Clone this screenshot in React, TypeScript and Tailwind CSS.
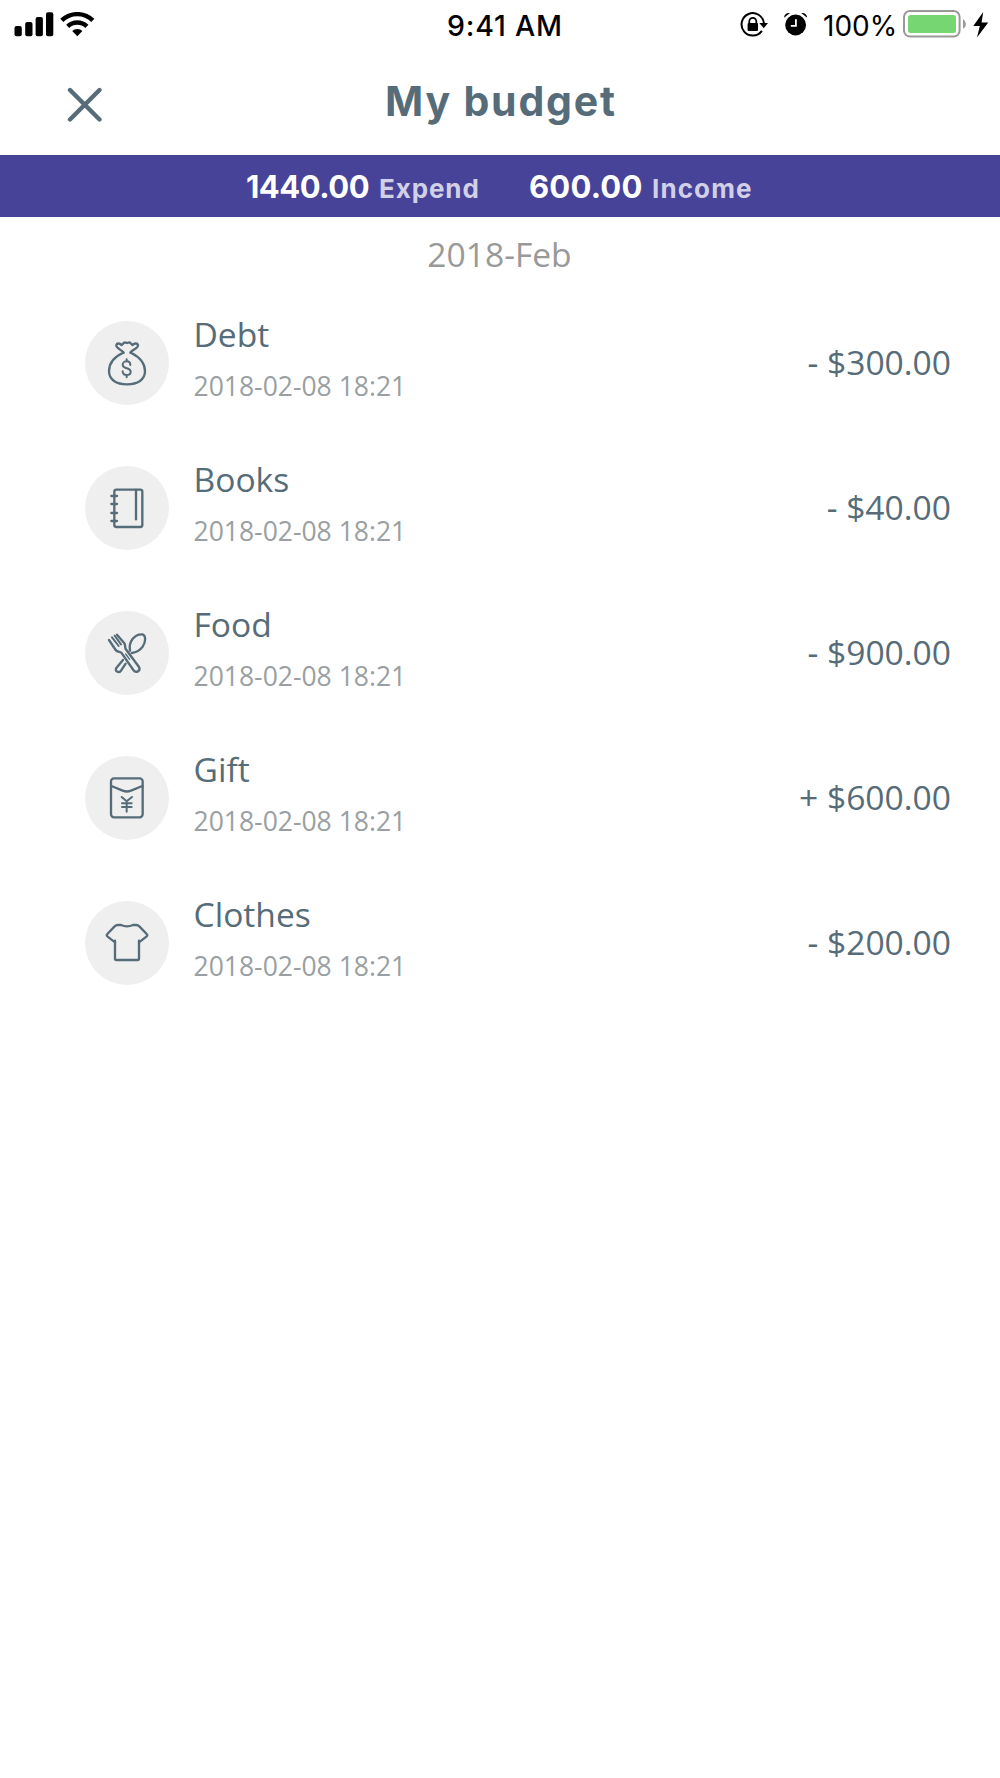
import type { ReactNode } from 'react';

type Entry = {
  name: string;
  date: string;
  amount: string;
  icon: ReactNode;
};

const entries: Entry[] = [
  { name: 'Debt', date: '2018-02-08 18:21', amount: '- $300.00', icon: <DebtIcon /> },
  { name: 'Books', date: '2018-02-08 18:21', amount: '- $40.00', icon: <BooksIcon /> },
  { name: 'Food', date: '2018-02-08 18:21', amount: '- $900.00', icon: <FoodIcon /> },
  { name: 'Gift', date: '2018-02-08 18:21', amount: '+ $600.00', icon: <GiftIcon /> },
  { name: 'Clothes', date: '2018-02-08 18:21', amount: '- $200.00', icon: <ClothesIcon /> },
];

function IconFrame({ children }: { children: ReactNode }) {
  return (
    <svg
      viewBox="15 31 252 252"
      className="size-[84px]"
      fill="none"
      stroke="#566c79"
      strokeWidth="7"
      strokeLinecap="round"
      strokeLinejoin="round"
    >
      {children}
    </svg>
  );
}

function DebtIcon() {
  return (
    <IconFrame>
      <path d="M128 127C100 140 87 160 87 182c0 25 22 39 54 39s54-14 54-39c0-22-15-42-41-55" />
      <path d="M131 126c-6-9-24-13-22-23 2-7 11-5 15 0 5-1 5-7 11-8 3 0 4 2 6 2s4-2 7-2c5 1 5 7 10 8 4-5 14-7 16 0 2 10-17 14-23 23" />
      <path d="M151 163c0-7-5-11-11-11s-12 4-12 10c0 14 24 8 24 21 0 6-5 10-12 10s-12-4-12-11M140 146v6M140 194v6" strokeWidth="6" />
    </IconFrame>
  );
}

function BooksIcon() {
  return (
    <IconFrame>
      <rect x="103" y="102" width="84" height="112" rx="6" />
      <path d="M168 103v88" />
      <path d="M94 121h17M94 145h17M94 172h17M94 196h17" />
    </IconFrame>
  );
}

function FoodIcon() {
  return (
    <IconFrame>
      <path d="M87 118l20 30c4 6 12 5 17 8l36 52c8 11 23 3 17-9l-40-54c-3-6 0-11-4-17l-22-26" />
      <path d="M96 110l20 26M104 105l19 26" strokeWidth="6" />
      <path d="M137 160l12 16" strokeWidth="4" />
      <path d="M150 150c-5-27 13-50 37-49 12 3 10 24 1 37-7 10-18 17-33 19" />
      <path d="M129 178l-20 24c-6 9 7 17 14 8l14-21" />
    </IconFrame>
  );
}

function GiftIcon() {
  return (
    <IconFrame>
      <rect x="93" y="98" width="95" height="117" rx="9" />
      <path d="M94 121l34 14q12 5 25 0l34-14" />
      <path d="M125 154l15 13 16-13M140 167v31M126 173h29M126 184h29" strokeWidth="6" />
    </IconFrame>
  );
}

function ClothesIcon() {
  return (
    <IconFrame>
      <path d="M105 150v56q0 2 3 2h66q3 0 3-2v-56" />
      <path d="M105 155L83 138q-5-4-1-8l22-23q4-4 9-4h10q18 8 36 0h10q5 0 9 4l22 23q4 4-1 8l-22 17" />
    </IconFrame>
  );
}

function StatusBar() {
  return (
    <div className="flex h-[50px] text-black">
      <div className="flex w-[447px] pt-3 pl-3.5">
        <svg viewBox="0 0 40 25" className="h-[25px] w-10">
          <rect x="0.5" y="14" width="7.3" height="10.3" rx="2" />
          <rect x="11.2" y="10" width="7.3" height="14.3" rx="2" />
          <rect x="21.6" y="5" width="7.3" height="19.3" rx="2" />
          <rect x="32" y="0.2" width="7.3" height="24.1" rx="2" />
        </svg>
        <svg viewBox="0 0 36 25" className="ml-1.5 h-[25px] w-9" fill="none" stroke="#000" strokeWidth="4.4">
          <path d="M1.8 8.4a22.3 22.3 0 0 1 31 0" />
          <path d="M7.7 14.4a13.8 13.8 0 0 1 19.2 0" />
          <path d="M12.2 19a7.2 7.2 0 0 1 10.2 0l-5.1 5.3z" fill="#000" stroke="none" />
        </svg>
      </div>
      <p className="w-[293px] pt-[6px] font-[Inter] text-[28.5px] leading-10 font-medium tracking-[0.8px] whitespace-nowrap">
        9:41 AM
      </p>
      <svg viewBox="0 0 28 25" className="mt-3 h-[25px] w-7" fill="none" stroke="#000" strokeWidth="2">
        <path d="M21.9 18.8A11.2 11.2 0 1 1 23.9 11.2" />
        <path d="M19.4 11h8.6l-4.3 5.2z" fill="#000" stroke="none" />
        <rect x="7.6" y="11" width="10.4" height="8" rx="1" fill="#000" stroke="none" />
        <path d="M9.3 11.5V9.3a3.5 3.5 0 0 1 7 0v2.2" strokeWidth="1.8" />
      </svg>
      <svg viewBox="0 0 24 25" className="mt-3 ml-4 h-[25px] w-6">
        <circle cx="11.6" cy="13" r="10.4" />
        <path d="M0 5.8C.2 2 3 .4 6 1zM23.2 5.8C23 2 20.2.4 17.2 1z" />
        <path d="M11.9 7.2v6.6H6.8" fill="none" stroke="#fff" strokeWidth="1.8" />
      </svg>
      <p className="ml-[15px] w-[80px] pt-[6px] font-[Inter] text-[28px] leading-10 whitespace-nowrap">100%</p>
      <svg viewBox="0 0 64 28" className="mt-2.5 h-7 w-16">
        <rect x="1" y="1" width="55.6" height="25.6" rx="6" fill="none" stroke="#999" strokeWidth="2" />
        <rect x="5" y="5" width="48" height="18" rx="2.5" fill="#76d672" />
        <path d="M60 9.2q3 1.8 3 4.8t-3 4.8z" fill="#999" />
      </svg>
      <svg viewBox="0 0 16 26" className="mt-3 ml-1.5 h-[26px] w-4">
        <path d="M10.2 0L.3 14h6.5L4 25.5 15.2 10.5H8.6z" />
      </svg>
    </div>
  );
}

export default function App() {
  return (
    <div className="min-h-[1778px] w-[1000px] bg-white font-['Open_Sans',sans-serif] text-[#566c79]">
      <StatusBar />

      <header className="flex h-[105px] pl-[67px]">
        <button aria-label="Close" className="mt-[37px] size-[35px]">
          <svg viewBox="0 0 35 35" fill="none" stroke="#566c79" strokeWidth="4.4" strokeLinecap="round">
            <path d="M3 3l29.5 29.5M32.5 3L3 32.5" />
          </svg>
        </button>
        <h1 className="ml-[283px] pt-[26px] font-[Inter] text-[41px] leading-[50px] font-bold tracking-[1.8px] whitespace-nowrap">
          My budget
        </h1>
      </header>

      <div className="flex h-[62px] items-baseline bg-[#474399] pt-3 pl-[246px] font-[Inter] leading-10 font-bold whitespace-nowrap text-white">
        <span className="w-[133px] text-[31px] tracking-[-0.5px]">1440.00</span>
        <span className="w-[150px] text-[26px] tracking-[0.9px] text-[#d1d0e6]">Expend</span>
        <span className="w-[123px] text-[31px] tracking-[0.2px]">600.00</span>
        <span className="text-[26px] tracking-[1.1px] text-[#d1d0e6]">Income</span>
      </div>

      <p className="mt-[13px] h-12 pr-px text-center text-[33.6px] leading-[48px] text-[#999]">2018-Feb</p>

      <ul className="mt-[42.5px] flex flex-col gap-[61px] pr-[49px] pl-[85px]">
        {entries.map((entry) => (
          <li key={entry.name} className="flex h-[84px]">
            <div className="size-[84px] shrink-0 rounded-full bg-[#efefef]">{entry.icon}</div>
            <div className="ml-[24.5px] flex-1">
              <p className="-mt-[9.5px] text-[33.6px] leading-[46px]">{entry.name}</p>
              <p className="mt-[11px] text-[26.5px] leading-9 text-[#999fa2]">{entry.date}</p>
            </div>
            <p className="text-[33.6px] leading-[83px]">{entry.amount}</p>
          </li>
        ))}
      </ul>
    </div>
  );
}
